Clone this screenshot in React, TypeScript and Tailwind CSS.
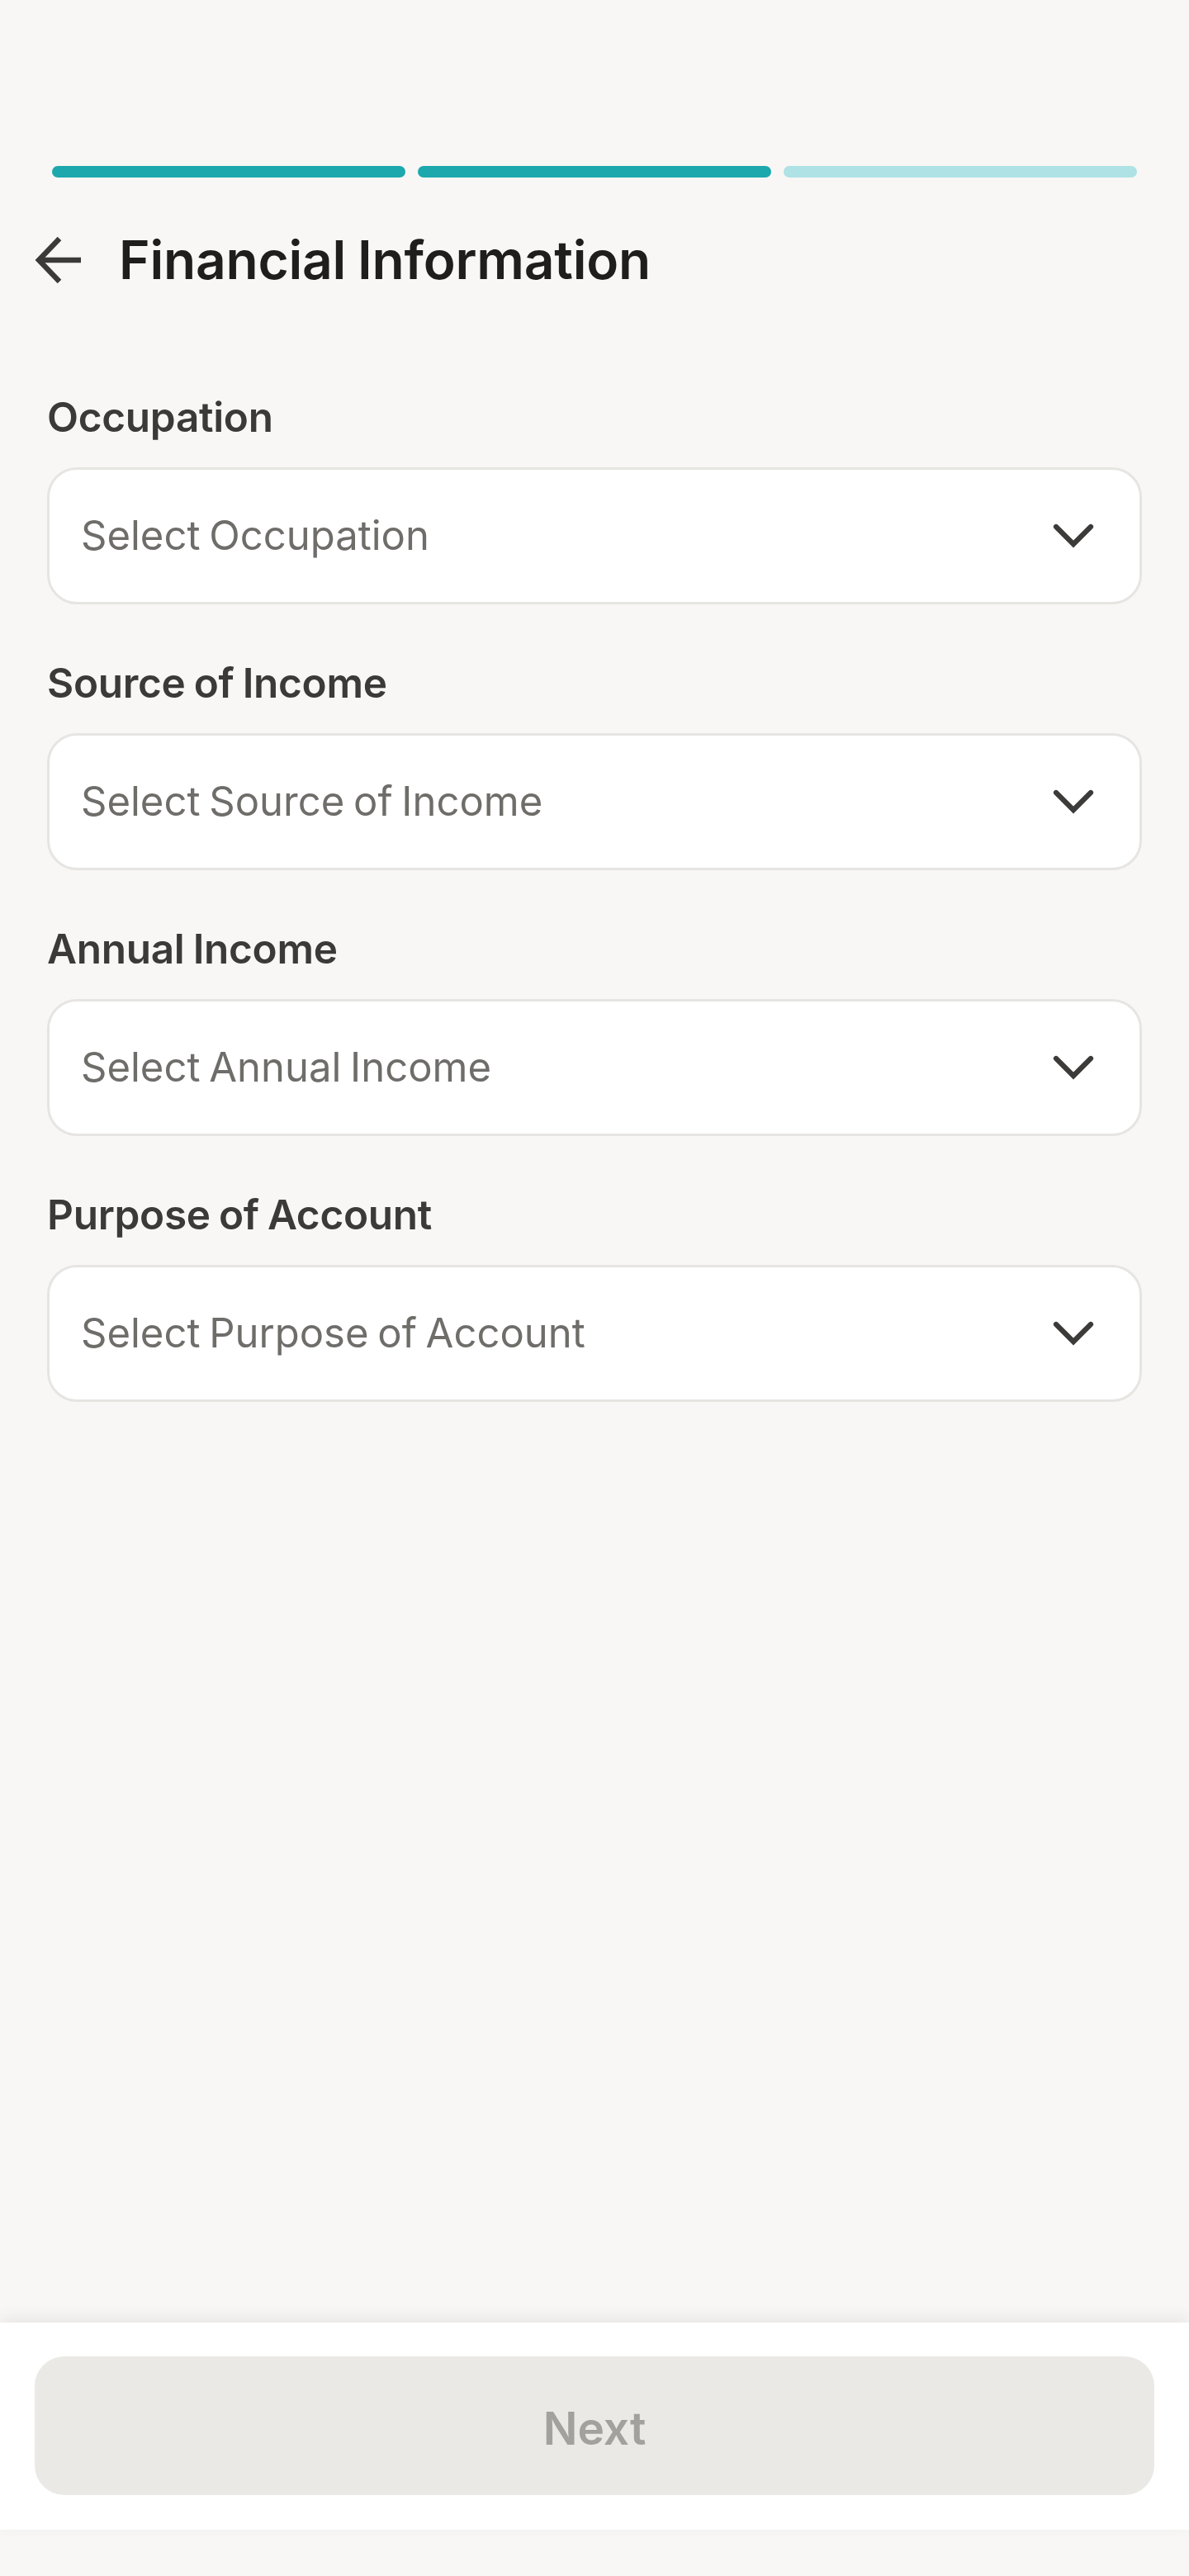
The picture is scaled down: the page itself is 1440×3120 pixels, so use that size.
import React from "react";

const fields = [
  { label: "Occupation", placeholder: "Select Occupation" },
  { label: "Source of Income", placeholder: "Select Source of Income" },
  { label: "Annual Income", placeholder: "Select Annual Income" },
  { label: "Purpose of Account", placeholder: "Select Purpose of Account" },
];

function Chevron() {
  return (
    <svg width="50" height="30" viewBox="0 0 50 30" fill="none" className="shrink-0">
      <path d="M4 4 L25 25 L46 4" stroke="#3C3B39" strokeWidth="6.2" strokeLinecap="round" strokeLinejoin="miter" />
    </svg>
  );
}

function BackArrow() {
  return (
    <svg width="60" height="60" viewBox="0 0 60 60" fill="none" className="shrink-0">
      <path d="M32 4 L7 30 L32 56" stroke="#3B3A38" strokeWidth="6.4" strokeLinecap="butt" strokeLinejoin="miter" />
      <path d="M8 30 H58" stroke="#3B3A38" strokeWidth="6.4" strokeLinecap="butt" />
    </svg>
  );
}

export default function App() {
  return (
    <div
      className="min-h-[3120px] flex flex-col bg-[#F8F7F5]"
      style={{ fontFamily: "Inter, 'Noto Sans', 'Liberation Sans', sans-serif" }}
    >
      <main className="flex-1 pt-[201px]">
        <div className="flex gap-[15px] px-[63px]">
          <div className="flex-1 h-[14px] rounded-full bg-[#1DA8AE]" />
          <div className="flex-1 h-[14px] rounded-full bg-[#1DA8AE]" />
          <div className="flex-1 h-[14px] rounded-full bg-[#AEE2E5]" />
        </div>

        <div className="mt-[62px] flex items-center h-[76px] pl-[40px]">
          <BackArrow />
          <h1 className="ml-[44px] text-[64px] leading-[76px] font-semibold text-[#1F1E1C] tracking-[-0.2px] [word-spacing:-2px]">
            Financial Information
          </h1>
        </div>

        <div className="mt-[123px] px-[57px] flex flex-col gap-[66px]">
          {fields.map((f) => (
            <div key={f.label} className="flex flex-col">
              <label className="text-[49.5px] leading-[58px] font-semibold text-[#3B3A38] tracking-[-0.3px] [word-spacing:-2px]">
                {f.label}
              </label>
              <div className="mt-[32px] h-[166px] bg-white border-[3px] border-[#E6E5E2] rounded-[36px] flex items-center justify-between pl-[38px] pr-[55px]">
                <span className="text-[49px] leading-[58px] font-normal text-[#6F6D6A] [word-spacing:-3px]">
                  {f.placeholder}
                </span>
                <Chevron />
              </div>
            </div>
          ))}
        </div>
      </main>

      <footer className="bg-white pt-[41px] pb-[42px] px-[42px] shadow-[0_-6px_18px_rgba(0,0,0,0.07)] relative">
        <button className="w-full h-[168px] rounded-[36px] bg-[#EAE9E5] flex items-center justify-center pt-[6px] text-[55px] font-semibold text-[#A3A19E]">
          Next
        </button>
      </footer>
      <div className="h-[56px] bg-[#F8F7F5]" />
    </div>
  );
}
